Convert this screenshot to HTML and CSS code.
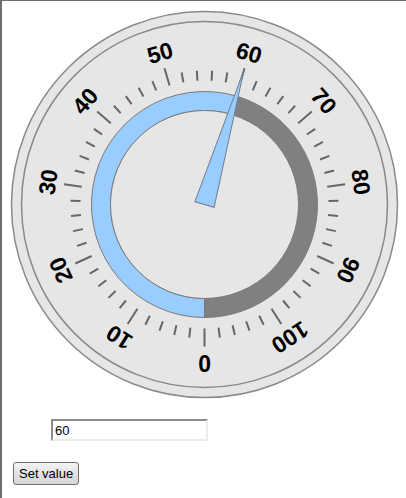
FILE: index.html
```html
<!DOCTYPE html>
<html>
<head>
<meta charset="utf-8">
<title>Dial</title>
<link rel="stylesheet" href="styles.css">
</head>
<body>
<div class="frame">
  <svg class="dial" width="404" height="408" viewBox="0 0 404 408">
    <g transform="translate(202.5 203.5)">
      <!-- bezel -->
      <circle class="face" r="193"/>
      <circle class="rim" r="183"/>

      <!-- value ring: filled part, then remainder -->
      <path class="ring-fill" d="M 0 113 A 113 113 0 1 1 31.835 -108.42 L 26.483 -90.192 A 94 94 0 1 0 0 94 Z"/>
      <path class="ring-rest" d="M 31.835 -108.42 A 113 113 0 0 1 0 113 L 0 94 A 94 94 0 0 0 26.483 -90.192 Z"/>
      <circle class="hub" r="94"/>

      <defs>
        <line id="tick-minor" x1="0" y1="-124" x2="0" y2="-134"/>
        <line id="tick-major" x1="0" y1="-124" x2="0" y2="-142"/>
      </defs>

      <!-- scale: 110 units around the dial, tick every 2 -->
      <g class="ticks">
        <use href="#tick-major" transform="rotate(180)"/>
        <use href="#tick-minor" transform="rotate(186.545)"/>
        <use href="#tick-minor" transform="rotate(193.091)"/>
        <use href="#tick-minor" transform="rotate(199.636)"/>
        <use href="#tick-minor" transform="rotate(206.182)"/>
        <use href="#tick-major" transform="rotate(212.727)"/>
        <use href="#tick-minor" transform="rotate(219.273)"/>
        <use href="#tick-minor" transform="rotate(225.818)"/>
        <use href="#tick-minor" transform="rotate(232.364)"/>
        <use href="#tick-minor" transform="rotate(238.909)"/>
        <use href="#tick-major" transform="rotate(245.455)"/>
        <use href="#tick-minor" transform="rotate(252)"/>
        <use href="#tick-minor" transform="rotate(258.545)"/>
        <use href="#tick-minor" transform="rotate(265.091)"/>
        <use href="#tick-minor" transform="rotate(271.636)"/>
        <use href="#tick-major" transform="rotate(278.182)"/>
        <use href="#tick-minor" transform="rotate(284.727)"/>
        <use href="#tick-minor" transform="rotate(291.273)"/>
        <use href="#tick-minor" transform="rotate(297.818)"/>
        <use href="#tick-minor" transform="rotate(304.364)"/>
        <use href="#tick-major" transform="rotate(310.909)"/>
        <use href="#tick-minor" transform="rotate(317.455)"/>
        <use href="#tick-minor" transform="rotate(324)"/>
        <use href="#tick-minor" transform="rotate(330.545)"/>
        <use href="#tick-minor" transform="rotate(337.091)"/>
        <use href="#tick-major" transform="rotate(343.636)"/>
        <use href="#tick-minor" transform="rotate(350.182)"/>
        <use href="#tick-minor" transform="rotate(356.727)"/>
        <use href="#tick-minor" transform="rotate(3.273)"/>
        <use href="#tick-minor" transform="rotate(9.818)"/>
        <use href="#tick-major" transform="rotate(16.364)"/>
        <use href="#tick-minor" transform="rotate(22.909)"/>
        <use href="#tick-minor" transform="rotate(29.455)"/>
        <use href="#tick-minor" transform="rotate(36)"/>
        <use href="#tick-minor" transform="rotate(42.545)"/>
        <use href="#tick-major" transform="rotate(49.091)"/>
        <use href="#tick-minor" transform="rotate(55.636)"/>
        <use href="#tick-minor" transform="rotate(62.182)"/>
        <use href="#tick-minor" transform="rotate(68.727)"/>
        <use href="#tick-minor" transform="rotate(75.273)"/>
        <use href="#tick-major" transform="rotate(81.818)"/>
        <use href="#tick-minor" transform="rotate(88.364)"/>
        <use href="#tick-minor" transform="rotate(94.909)"/>
        <use href="#tick-minor" transform="rotate(101.455)"/>
        <use href="#tick-minor" transform="rotate(108)"/>
        <use href="#tick-major" transform="rotate(114.545)"/>
        <use href="#tick-minor" transform="rotate(121.091)"/>
        <use href="#tick-minor" transform="rotate(127.636)"/>
        <use href="#tick-minor" transform="rotate(134.182)"/>
        <use href="#tick-minor" transform="rotate(140.727)"/>
        <use href="#tick-major" transform="rotate(147.273)"/>
        <use href="#tick-minor" transform="rotate(153.818)"/>
        <use href="#tick-minor" transform="rotate(160.364)"/>
        <use href="#tick-minor" transform="rotate(166.909)"/>
        <use href="#tick-minor" transform="rotate(173.455)"/>
      </g>

      <g class="labels">
        <text transform="rotate(180)" y="-158">0</text>
        <text transform="rotate(212.727)" y="-158">10</text>
        <text transform="rotate(245.455)" y="-158">20</text>
        <text transform="rotate(278.182)" y="-158">30</text>
        <text transform="rotate(310.909)" y="-158">40</text>
        <text transform="rotate(343.636)" y="-158">50</text>
        <text transform="rotate(16.364)" y="-158">60</text>
        <text transform="rotate(49.091)" y="-158">70</text>
        <text transform="rotate(81.818)" y="-158">80</text>
        <text transform="rotate(114.545)" y="-158">90</text>
        <text transform="rotate(147.273)" y="-158">100</text>
      </g>

      <!-- pointer at 60 -->
      <polygon class="needle" transform="rotate(16.364)" points="-10,0 10,0 0,-140"/>
    </g>
  </svg>

  <div class="controls">
    <input class="value-field" type="text" value="60">
    <button class="set-btn" type="button">Set value</button>
  </div>
</div>
</body>
</html>
```

FILE: styles.css
```css
html, body {
  margin: 0;
  padding: 0;
  background: #fff;
}

.frame {
  width: 404px;
  height: 497px;
  border-top: 1px solid #6e6e6e;
  border-left: 2px solid #6e6e6e;
  font-family: "Liberation Sans", Arial, sans-serif;
}

.dial {
  display: block;
}

.face {
  fill: #e6e6e6;
  stroke: #8a8a8a;
  stroke-width: 1.5;
}

.rim {
  fill: none;
  stroke: #8a8a8a;
  stroke-width: 1.5;
}

.ring-fill {
  fill: #99ccff;
  stroke: #7a7a7a;
  stroke-width: 1;
}

.ring-rest {
  fill: #808080;
  stroke: #7a7a7a;
  stroke-width: 1;
}

.hub {
  fill: #e6e6e6;
  stroke: #7a7a7a;
  stroke-width: 1;
}

.ticks use {
  stroke: #666;
  stroke-width: 2;
}

.labels text {
  font-family: "Liberation Sans", Arial, sans-serif;
  font-weight: bold;
  font-size: 23px;
  fill: #000;
  text-anchor: middle;
  dominant-baseline: central;
}

.needle {
  fill: #99ccff;
  stroke: #6f7f8f;
  stroke-width: 1;
  stroke-linejoin: miter;
}

.controls {
  display: flex;
  flex-direction: column;
  align-items: flex-start;
}

.value-field {
  box-sizing: border-box;
  width: 157px;
  height: 22px;
  margin: 10px 0 0 49px;
  padding: 1px 2px;
  border: 2px solid;
  border-color: #8c8c8c #ececec #ececec #8c8c8c;
  background: #fff;
  font-family: "Liberation Sans", Arial, sans-serif;
  font-size: 13px;
  color: #000;
  outline: none;
}

.set-btn {
  box-sizing: border-box;
  height: 23px;
  margin: 21px 0 0 11px;
  padding: 0 5px;
  border: 1px solid #707070;
  border-radius: 3px;
  background: linear-gradient(#f4f4f4, #e2e2e2 50%, #d6d6d6);
  font-family: "Liberation Sans", Arial, sans-serif;
  font-size: 13px;
  color: #000;
}
```
